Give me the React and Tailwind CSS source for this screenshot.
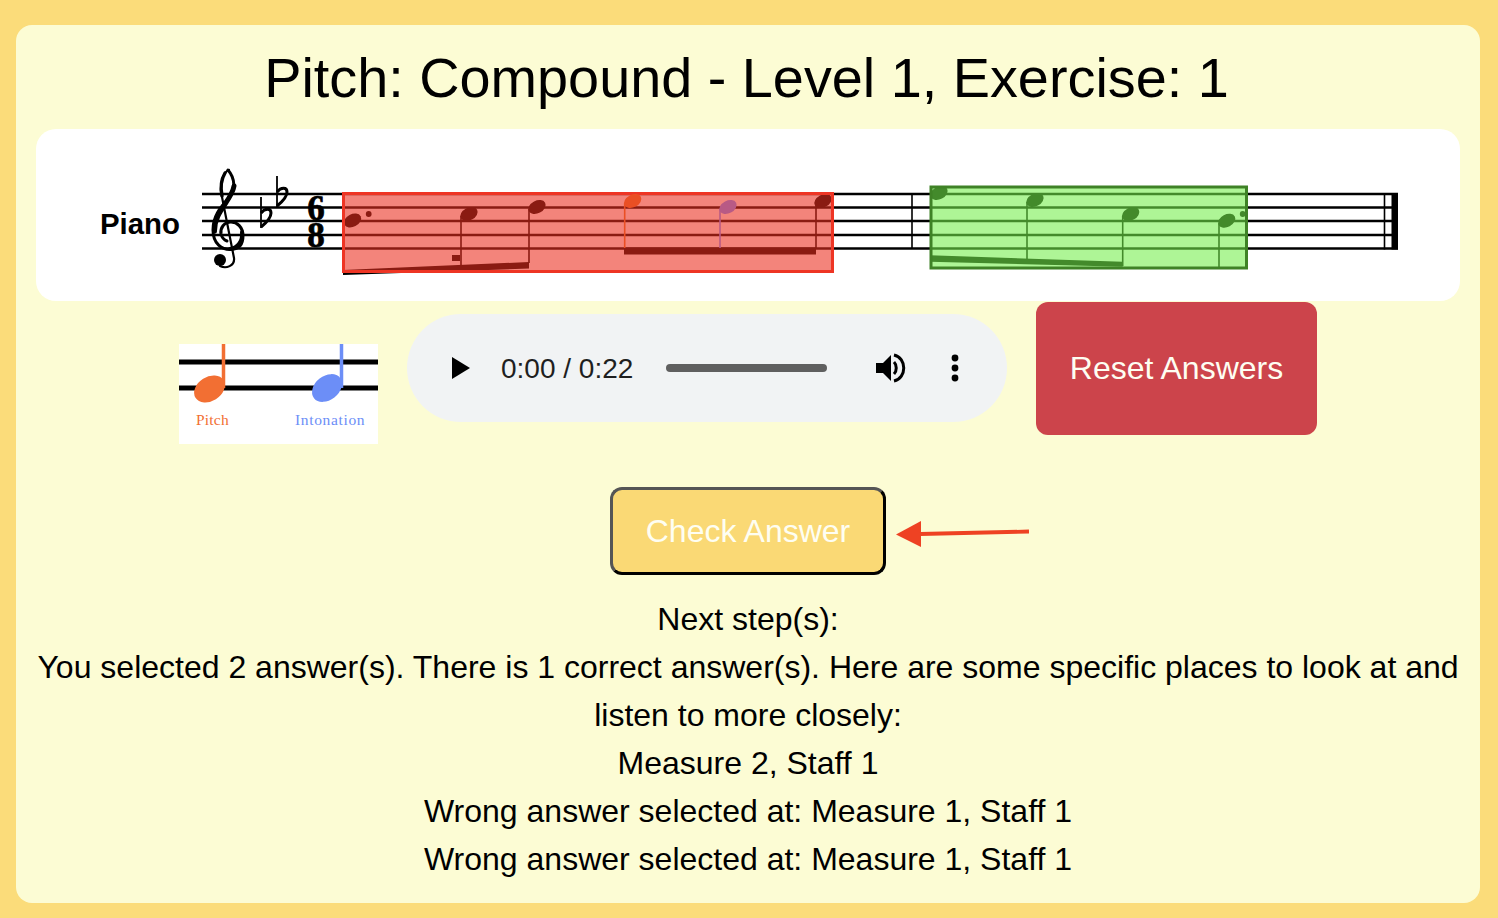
import React from 'react';

const staffY = [194, 207.5, 221, 235, 248.5];

const Note = ({ x, y, fill = '#000' }) => (
    <ellipse cx={x} cy={y} rx="9.2" ry="6.3" transform={`rotate(-28 ${x} ${y})`} fill={fill} />
);

const Flat = ({ x, y }) => (
    <g fill="none" stroke="#000">
        <path d={`M${x} ${y} V${y + 31}`} strokeWidth="1.8" />
        <path d={`M${x} ${y + 16} C${x + 4} ${y + 11} ${x + 10} ${y + 11} ${x + 10} ${y + 16} C${x + 10} ${y + 21} ${x + 5} ${y + 26} ${x} ${y + 30}`} strokeWidth="3" />
    </g>
);

const Score = () => (
    <svg viewBox="202 129 1200 172" className="w-[1200px] h-[172px] shrink-0">
        {staffY.map((y) => (
            <path key={y} d={`M202 ${y} H1398`} stroke="#000" strokeWidth="2.4" />
        ))}

        {/* clef */}
        <g fill="none" stroke="#000" strokeLinecap="round">
            <path d="M229 170 C223 172 219 185 222 197 L234 258 C235 266 226 269 220 266" strokeWidth="2.2" />
            <path d="M228 170 C235 178 236 190 229 198 C221 207 213 215 213 230 C213 244 222 250 231 249.5 C240 249 243 243 243 236 C243 227 237 222 231 222 C224 222 220 228 221 234 C222 238 224 240 227 241" strokeWidth="3" />
            <path d="M234 186 C232 200 214 212 214.5 231" strokeWidth="5" />
            <path d="M225 173 C222 178 220 186 222 196" strokeWidth="3.4" />
            <path d="M242 232 C243 241 238 248 230 249" strokeWidth="4" />
        </g>
        <circle cx="220" cy="260" r="6" fill="#000" />

        <Flat x={261} y={197} />
        <Flat x={277} y={176} />
        <text textAnchor="middle" fontSize="35" fontWeight="700" stroke="#000" strokeWidth="0.7" fontFamily="'Liberation Serif', serif" fill="#000">
            <tspan x="316" y="220">6</tspan>
            <tspan x="316" y="247">8</tspan>
        </text>

        {/* measure 1 */}
        <Note x={352.5} y={220.5} />
        <circle cx="368.7" cy="214" r="2.9" fill="#000" />
        <Note x={469} y={214} />
        <path d="M461 216 V266 M529 209 V263" stroke="#000" strokeWidth="1.6" />
        <Note x={537} y={207} />
        <path d="M343 270 L529 262 V268.5 L343 275 Z M452 255 H460 V261 H452 Z" fill="#000" />
        <path d="M816 203 V248" stroke="#000" strokeWidth="1.6" />
        <Note x={823} y={201} />
        <path d="M624 247.5 H816 V254.5 H624 Z" fill="#000" />
        <rect x="343.5" y="193.5" width="489" height="78" fill="#eb2e1f" fillOpacity="0.59" stroke="#ee3524" strokeWidth="3" />
        <path d="M624.7 203 V248" stroke="#ea4f24" strokeWidth="1.6" />
        <path d="M720 209 V248" stroke="#b85a85" strokeWidth="1.6" />
        <Note x={632.7} y={201} fill="#ea4f24" />
        <Note x={728} y={207} fill="#b85a85" />

        <path d="M912 194 V248.5" stroke="#000" strokeWidth="1.6" />

        {/* measure 2 */}
        <Note x={939} y={193} />
        <Note x={1035} y={200} />
        <Note x={1130.7} y={214} />
        <Note x={1226.7} y={220.7} />
        <circle cx="1242.7" cy="214" r="2.9" fill="#000" />
        <path d="M1027 202 V263 M1122.7 216 V266 M1219 223 V268" stroke="#000" strokeWidth="1.6" />
        <path d="M930 255.3 L1122.7 261.7 V266.7 L930 261.7 Z" fill="#000" />
        <rect x="931" y="187" width="315.5" height="81" fill="#73ee4a" fillOpacity="0.58" stroke="#3f8226" strokeWidth="3" />

        <path d="M1384.5 193 V249.5" stroke="#000" strokeWidth="1.6" />
        <path d="M1391.5 193 H1398 V249.5 H1391.5 Z" fill="#000" />
    </svg>
);

const Legend = () => (
    <svg viewBox="0 0 199 100" className="w-[199px] h-[100px] shrink-0 bg-white mt-[42px]">
        <path d="M0 18 H199 M0 44 H199" stroke="#000" strokeWidth="5" />
        <path d="M44.5 0 V44" stroke="#f26f33" strokeWidth="3.5" />
        <ellipse cx="30.5" cy="45" rx="16.5" ry="12" transform="rotate(-32 30.5 45)" fill="#f26f33" />
        <path d="M162.5 0 V44" stroke="#6c8ef7" strokeWidth="3.5" />
        <ellipse cx="148" cy="44" rx="16.5" ry="12" transform="rotate(-38 148 44)" fill="#6c8ef7" />
        <text x="17" y="80.5" fontSize="15.5" letterSpacing="0.2" fontFamily="'Liberation Serif', serif" fill="#f26f33">Pitch</text>
        <text x="116" y="80.5" fontSize="15.5" letterSpacing="0.65" fontFamily="'Liberation Serif', serif" fill="#6c8ef7">Intonation</text>
    </svg>
);

const AudioBar = () => (
    <div className="flex items-center w-[600px] h-[108px] rounded-[54px] bg-[#f1f3f4] shrink-0 mt-3 pl-[45px] text-[#1f1f1f]">
        <svg viewBox="0 0 18 22" className="w-[18px] h-[22px] shrink-0">
            <path d="M0 0 L18 11 L0 22 Z" fill="#000" />
        </svg>
        <span className="ml-[31px] mt-0.5 text-[28px] leading-none whitespace-nowrap">0:00 / 0:22</span>
        <div className="ml-[33px] w-[161px] h-2 rounded-full bg-[#5f5f5f] shrink-0" />
        <svg viewBox="0 0 32 32" className="ml-[49px] w-8 h-8 shrink-0">
            <path d="M0 11 H7 L15 3 V29 L7 21 H0 Z" fill="#000" />
            <path d="M18 10 C21 13 21 19 18 22" fill="none" stroke="#000" strokeWidth="3" />
            <path d="M18 3 C31 6 31 26 18 29" fill="none" stroke="#000" strokeWidth="3" />
        </svg>
        <svg viewBox="0 0 8 28" className="ml-[43px] w-2 h-7 shrink-0">
            <circle cx="4" cy="4" r="3.4" fill="#000" />
            <circle cx="4" cy="14" r="3.4" fill="#000" />
            <circle cx="4" cy="24" r="3.4" fill="#000" />
        </svg>
    </div>
);

const lines = [
    'Next step(s):',
    'You selected 2 answer(s). There is 1 correct answer(s). Here are some specific places to look at and listen to more closely:',
    'Measure 2, Staff 1',
    'Wrong answer selected at: Measure 1, Staff 1',
    'Wrong answer selected at: Measure 1, Staff 1',
];

export default function App() {
    return (
        <div className="h-[918px] overflow-hidden bg-[#fbdc7a] pl-4 pr-[18px] pt-[25px] font-['Liberation_Sans',sans-serif] text-black">
            <div className="h-[878px] rounded-2xl bg-[#fcfcd4] px-5">
                <h1 className="h-[104px] pt-0.5 flex items-center justify-center text-[55.8px] pr-[3px]">
                    Pitch: Compound - Level 1, Exercise: 1
                </h1>

                <div className="flex items-center h-[172px] rounded-[20px] bg-white pl-16 overflow-hidden">
                    <span className="w-[102px] mt-[18px] shrink-0 text-[29.4px] font-bold">Piano</span>
                    <Score />
                </div>

                <div className="flex justify-center items-start gap-[29px] mt-px">
                    <Legend />
                    <AudioBar />
                    <button className="w-[281px] h-[133px] pb-0.5 shrink-0 rounded-xl bg-[#cc444b] text-[32px] text-[#fefef2]">
                        Reset Answers
                    </button>
                </div>

                <div className="flex justify-center mt-[43px]">
                    <div className="relative">
                        <button className="w-[276px] h-[88px] rounded-xl bg-[#fad975] border-[3px] border-t-[#555] border-l-[#555] border-r-black border-b-black text-[32px] text-[#fefef2]">
                            Check Answer
                        </button>
                        <svg viewBox="0 0 136 28" className="absolute left-[286px] top-[32px] w-[136px] h-7">
                            <path d="M0 15.5 L25 2 V28 Z" fill="#ee4223" />
                            <path d="M24 15 L133 12.5" stroke="#ee4223" strokeWidth="3.8" />
                        </svg>
                    </div>
                </div>

                <div className="mt-5 text-center text-[32px] leading-[48px]">
                    {lines.map((line, i) => (
                        <p key={i}>{line}</p>
                    ))}
                </div>
            </div>
        </div>
    );
}
